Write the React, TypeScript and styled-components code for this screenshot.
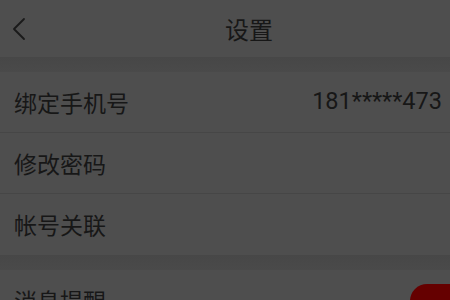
import React from "react";
import styled, { createGlobalStyle } from "styled-components";

const GlobalStyle = createGlobalStyle`
  html, body {
    margin: 0;
    padding: 0;
    background: #4e4e4e;
    overflow: hidden;
  }
  body {
    font-family: "Noto Sans CJK SC", "Noto Sans", sans-serif;
  }
`;

interface Item {
  label: string;
  value?: string;
}

const group: Item[] = [
  { label: "绑定手机号", value: "181*****473" },
  { label: "修改密码" },
  { label: "帐号关联" },
];

function App() {
  return (
    <>
      <GlobalStyle />
      <Page>
        <Header>
          <Back aria-label="返回">
            <svg width="14" height="24" viewBox="0 0 14 24" fill="none">
              <path
                d="M12 2 L2 12 L12 22"
                stroke="#1a1a1a"
                strokeWidth="1.8"
                strokeLinecap="round"
                strokeLinejoin="round"
              />
            </svg>
          </Back>
          <Title>设置</Title>
        </Header>
        <Gap />
        <Group>
          {group.map((item, i) => (
            <Row key={item.label} last={i === group.length - 1}>
              <Label>{item.label}</Label>
              {item.value && <Value>{item.value}</Value>}
            </Row>
          ))}
        </Group>
        <Gap />
        <Group>
          <Row last>
            <Label>消息提醒</Label>
            <Toggle />
          </Row>
        </Group>
      </Page>
    </>
  );
}

export default App;

const Page = styled.div`
  width: 450px;
  height: 300px;
  overflow: hidden;
  background: #4e4e4e;
`;

const Header = styled.div`
  position: relative;
  height: 57px;
  display: flex;
  align-items: center;
  justify-content: center;
  background: #4e4e4e;
`;

const Back = styled.button`
  position: absolute;
  left: 12px;
  top: 17px;
  padding: 0;
  border: none;
  background: none;
  display: flex;
`;

const Title = styled.h1`
  margin: 0 0 0 48px;
  font-size: 24px;
  font-weight: 400;
  line-height: 1;
  color: #171717;
`;

const Gap = styled.div`
  height: 15px;
  background: linear-gradient(#474747, #4a4a4a);
`;

const Group = styled.div`
  display: flex;
  flex-direction: column;
  background: #4e4e4e;
`;

const Row = styled.div<{ last?: boolean }>`
  height: 61px;
  padding: 0 8px 0 14px;
  display: flex;
  align-items: center;
  justify-content: space-between;
  box-sizing: border-box;
  border-bottom: ${(p) => (p.last ? "none" : "1px solid #464646")};
`;

const Label = styled.span`
  font-size: 23px;
  color: #171717;
  line-height: 1;
`;

const Value = styled.span`
  font-family: Roboto, "Noto Sans", sans-serif;
  font-size: 23.5px;
  color: #171717;
  line-height: 1;
`;

const Toggle = styled.div`
  width: 64px;
  height: 34px;
  margin: 0 -32px 0 0;
  border-radius: 17px;
  background: #650000;
  flex-shrink: 0;
`;
